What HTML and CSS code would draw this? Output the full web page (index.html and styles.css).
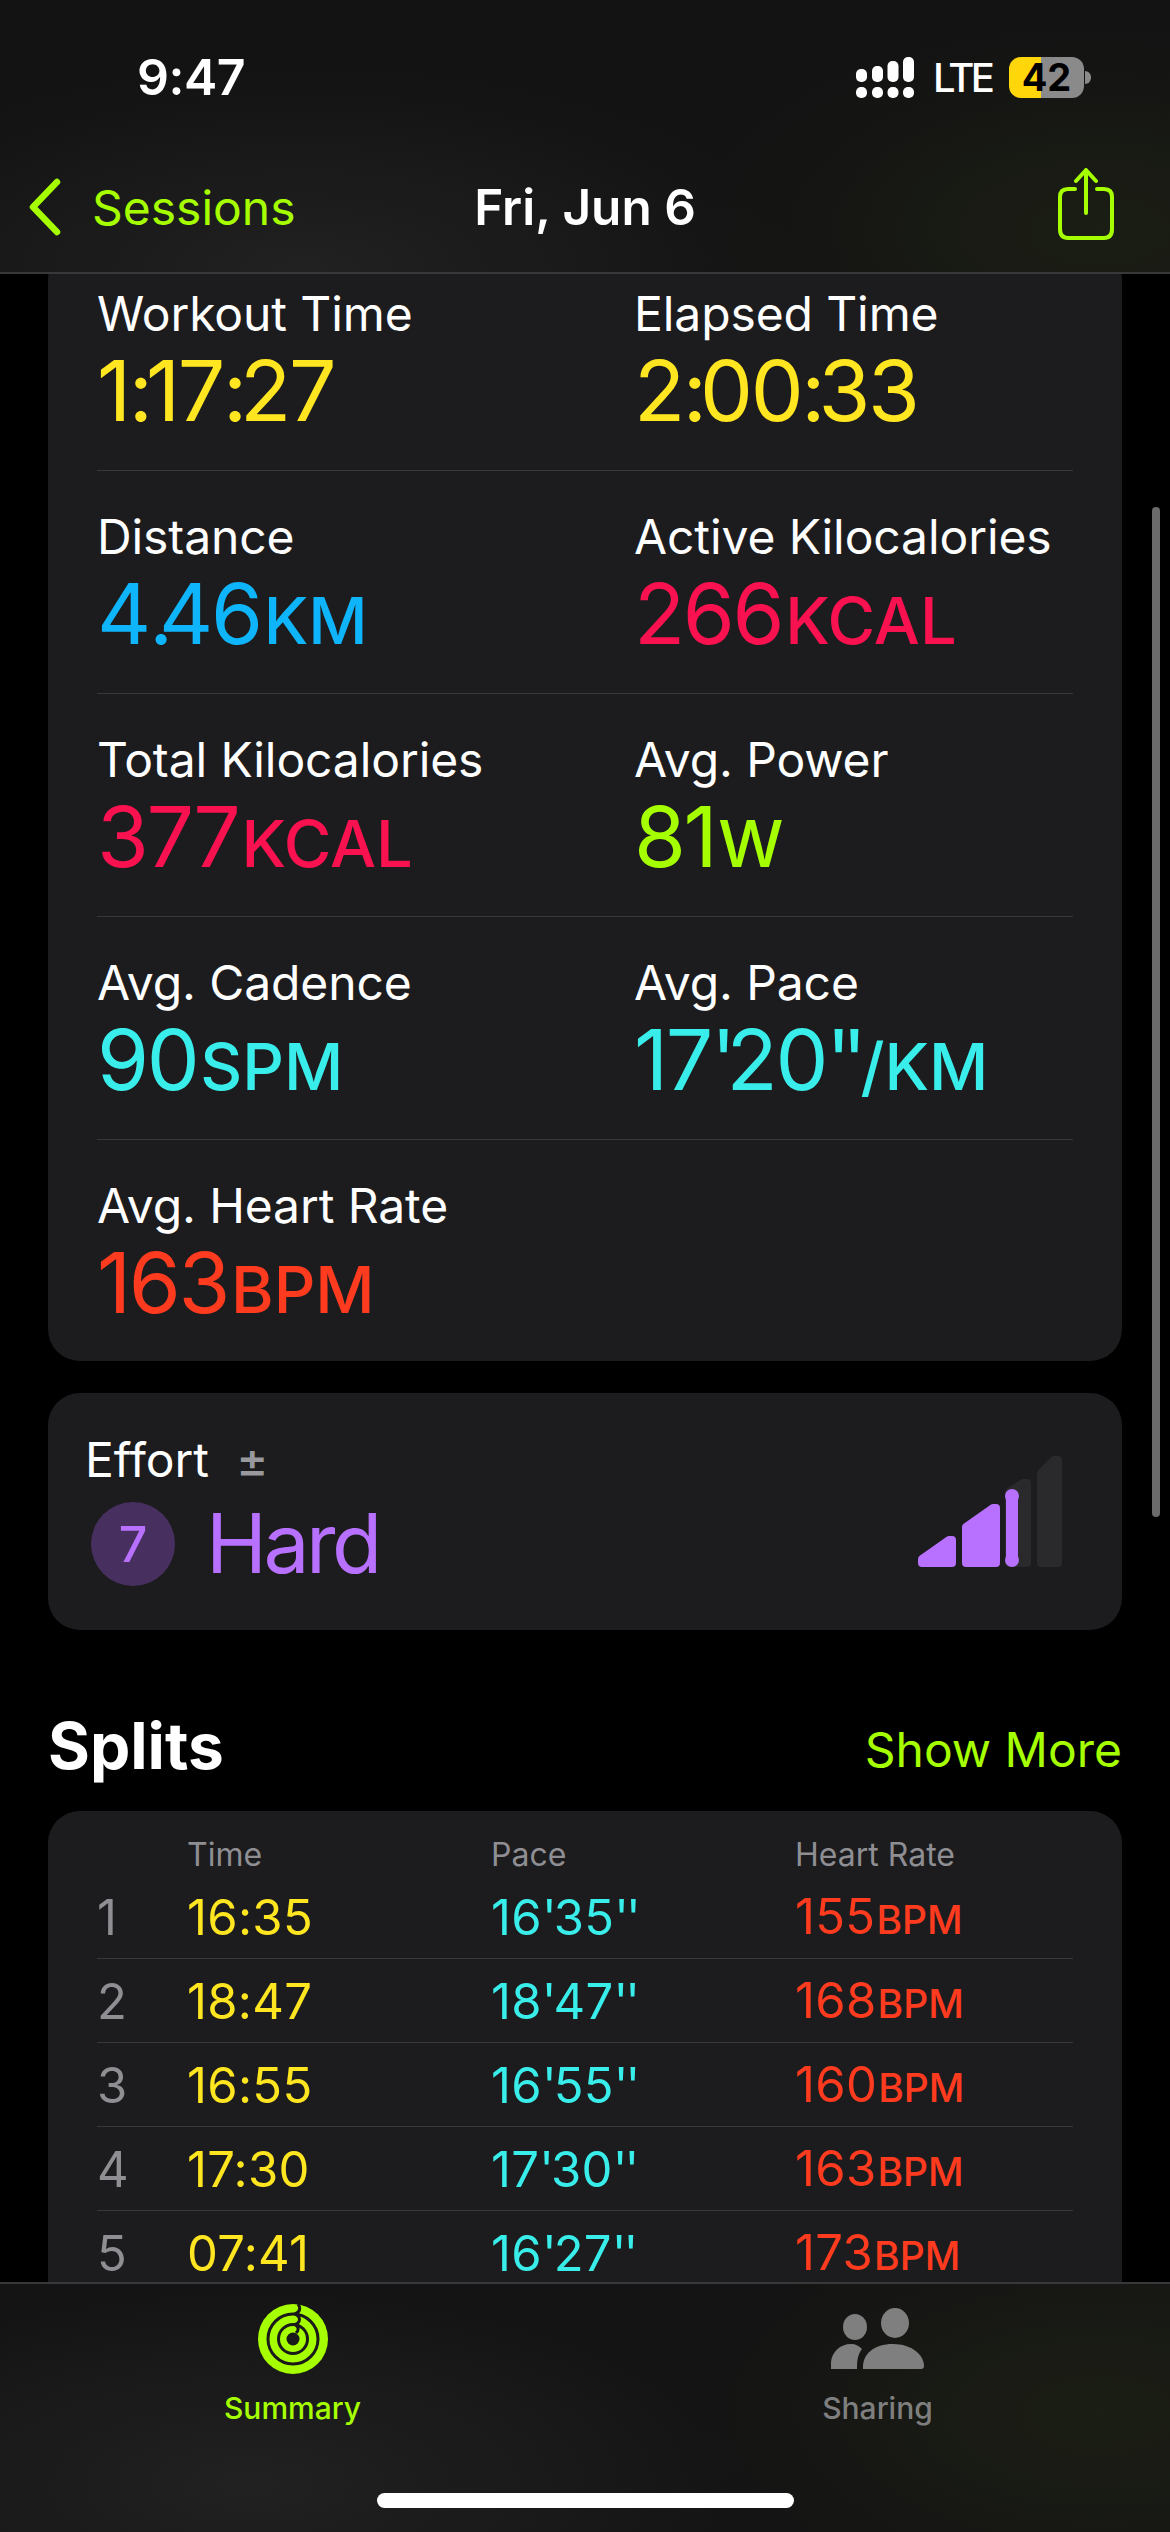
FILE: index.html
```html
<!DOCTYPE html>
<html lang="en">
<head>
  <meta charset="UTF-8">
  <title>Fri, Jun 6</title>
  <link rel="stylesheet" href="styles.css">
</head>
<body>
  <div class="app">
    <header class="topbar">
      <div class="status">
        <span class="clock">9:47</span>
        <div class="status-right">
          <svg class="signal" width="58" height="41" viewBox="0 0 58 41">
            <rect x="0" y="12" width="11" height="13" rx="5" />
            <rect x="16" y="9" width="11" height="16" rx="5" />
            <rect x="31.500" y="4" width="11" height="21" rx="5" />
            <rect x="47" y="0" width="11" height="25" rx="5" />
            <rect x="0" y="30" width="11" height="11" rx="5" />
            <rect x="16" y="30" width="11" height="11" rx="5" />
            <rect x="31.500" y="30" width="11" height="11" rx="5" />
            <rect x="47" y="30" width="11" height="11" rx="5" />
          </svg>
          <span class="lte">LTE</span>
          <div class="battery"><span>42</span></div>
          <span class="battery-tip"></span>
        </div>
      </div>
      <nav class="nav">
        <a class="back">
          <svg width="34" height="58" viewBox="0 0 34 58" fill="none" stroke="#a6ff00" stroke-width="6.500" stroke-linecap="round" stroke-linejoin="round"><path d="M29 4 L5 29 L29 54" /></svg>
          <span>Sessions</span>
        </a>
        <h1 class="nav-title">Fri, Jun 6</h1>
        <a class="share">
          <svg width="56" height="72" viewBox="0 0 56 72" fill="none" stroke="#a6ff00" stroke-width="4" stroke-linecap="round" stroke-linejoin="round"><path d="M17 21 H10 Q2 21 2 29 V61 Q2 70 10 70 H46 Q54 70 54 61 V29 Q54 21 46 21 H39" /><path d="M28 45 V3" /><path d="M18 13 L28 2 L38 13" /></svg>
        </a>
      </nav>
    </header>

    <main class="content">
      <div class="scroll">
        <section class="card metrics">
          <div class="metric-row">
            <div class="metric"><div class="label">Workout Time</div><div class="value yellow">1<i class="sep">:</i>17<i class="sep">:</i>27</div></div>
            <div class="metric"><div class="label">Elapsed Time</div><div class="value yellow">2<i class="sep">:</i>00<i class="sep">:</i>33</div></div>
          </div>
          <div class="metric-row">
            <div class="metric"><div class="label">Distance</div><div class="value blue">4<i class="dot">.</i>46<small>KM</small></div></div>
            <div class="metric"><div class="label">Active Kilocalories</div><div class="value pink">266<small>KCAL</small></div></div>
          </div>
          <div class="metric-row">
            <div class="metric"><div class="label">Total Kilocalories</div><div class="value pink">377<small>KCAL</small></div></div>
            <div class="metric"><div class="label">Avg. Power</div><div class="value lime">81<small>W</small></div></div>
          </div>
          <div class="metric-row">
            <div class="metric"><div class="label">Avg. Cadence</div><div class="value cyan">90<small>SPM</small></div></div>
            <div class="metric"><div class="label">Avg. Pace</div><div class="value cyan">17<i class="ticks">'</i>20<i class="ticks">''</i><small>/KM</small></div></div>
          </div>
          <div class="metric-row last">
            <div class="metric"><div class="label">Avg. Heart Rate</div><div class="value red">163<small>BPM</small></div></div>
          </div>
        </section>

        <section class="card effort">
          <div class="effort-left">
            <div class="label">Effort <span class="plusminus">±</span></div>
            <div class="effort-value">
              <span class="badge">7</span>
              <span class="effort-text">Hard</span>
            </div>
          </div>
          <svg class="effort-bars" width="144" height="111" viewBox="0 0 144 111">
            <g fill="#2a2a2c" stroke="#2a2a2c" stroke-width="8" stroke-linejoin="round">
              <path d="M91 36 L105 27 L109 27 V107 H91 Z" />
              <path d="M123 17 L136 4 L140 4 V107 H123 Z" />
            </g>
            <g fill="#b870ff" stroke="#b870ff" stroke-width="8" stroke-linejoin="round">
              <path d="M4 103 L31 84 L34 84 V107 H4 Z" />
              <path d="M48 71 L75 52 L78 52 V107 H48 Z" />
            </g>
            <g fill="#b870ff">
              <rect x="88" y="36" width="12" height="70" />
              <circle cx="94" cy="40" r="7" />
              <circle cx="94" cy="104" r="7" />
            </g>
          </svg>
        </section>

        <div class="section-head">
          <h2>Splits</h2>
          <a class="more">Show More</a>
        </div>

        <section class="card splits">
          <div class="split-head">
            <span></span><span>Time</span><span>Pace</span><span>Heart Rate</span>
          </div>
          <div class="split-row"><span class="num">1</span><span class="yellow">16:35</span><span class="cyan">16<i class="ticks">'</i>35<i class="ticks">''</i></span><span class="red">155<small>BPM</small></span></div>
          <div class="split-row"><span class="num">2</span><span class="yellow">18:47</span><span class="cyan">18<i class="ticks">'</i>47<i class="ticks">''</i></span><span class="red">168<small>BPM</small></span></div>
          <div class="split-row"><span class="num">3</span><span class="yellow">16:55</span><span class="cyan">16<i class="ticks">'</i>55<i class="ticks">''</i></span><span class="red">160<small>BPM</small></span></div>
          <div class="split-row"><span class="num">4</span><span class="yellow">17:30</span><span class="cyan">17<i class="ticks">'</i>30<i class="ticks">''</i></span><span class="red">163<small>BPM</small></span></div>
          <div class="split-row"><span class="num">5</span><span class="yellow">07:41</span><span class="cyan">16<i class="ticks">'</i>27<i class="ticks">''</i></span><span class="red">173<small>BPM</small></span></div>
        </section>
      </div>
      <div class="scrollbar"></div>
    </main>

    <footer class="tabbar">
      <div class="tabs">
        <a class="tab active">
          <svg width="70" height="70" viewBox="0 0 70 70">
            <circle cx="35" cy="35" r="35" fill="#a6ff00" />
            <g fill="none" stroke="#1a1a1a" stroke-width="3">
              <circle cx="35" cy="35" r="25" />
              <circle cx="35" cy="35" r="14.500" />
              <path d="M40 0 C43 4 42 8 37 10 C43 13 43 18 37 20.500 C41 23 41 26 38 29" />
            </g>
            <circle cx="35" cy="35" r="6.500" fill="#1a1a1a" />
          </svg>
          <span>Summary</span>
        </a>
        <a class="tab">
          <svg width="93" height="62" viewBox="0 0 93 62" fill="#7f7f7f">
            <ellipse cx="24" cy="19" rx="12" ry="13" />
            <ellipse cx="64" cy="15" rx="14" ry="15" />
            <path d="M0 61 V54 C1 44 9 36 20 36 C25 36 28 38 31 41 C27 46 26 52 26 61 Z" />
            <path d="M32 61 C31 46 43 36 62 36 C81 36 93 47 93 58 Q93 61 90 61 Z" />
          </svg>
          <span>Sharing</span>
        </a>
      </div>
      <div class="home-indicator"></div>
    </footer>
  </div>
</body>
</html>
```

FILE: styles.css
```css
* { box-sizing: border-box; }
html, body { margin: 0; padding: 0; background: #000; }
body { font-family: Inter, "Liberation Sans", sans-serif; color: #fff; }
h1, h2 { margin: 0; }
i { font-style: normal; }

.app { width: 1170px; height: 2532px; display: flex; flex-direction: column; overflow: hidden; position: relative; }

/* top */
.topbar {
  height: 274px;
  flex: none;
  border-bottom: 2px solid #38383a;
  background:
    radial-gradient(500px 200px at 300px 270px, #212121, transparent),
    radial-gradient(400px 200px at 1100px 230px, #1b1e14, transparent),
    #131313;
  position: relative;
  z-index: 2;
}
.status { display: flex; justify-content: space-between; align-items: center; height: 154px; padding: 0 79px 0 137px; }
.clock { font-size: 50px; font-weight: 600; line-height: 60px; letter-spacing: -0.5px; }
.status-right { display: flex; align-items: center; margin-top: 1px; }
.signal { fill: #fff; }
.lte { font-size: 40px; font-weight: 500; margin-left: 19px; line-height: 41px; letter-spacing: -3.500px; }
.battery {
  width: 75px;
  height: 41px;
  margin-left: 17.500px;
  border-radius: 12px;
  background: linear-gradient(90deg, #ffd60a 0, #ffd60a 32px, #8a8a8a 32px);
  color: #000;
  font-size: 38px;
  font-weight: 700;
  line-height: 41px;
  text-align: center;
}
.battery-tip { width: 6px; height: 13px; margin-left: 1px; background: #8a8a8a; border-radius: 0 7px 7px 0; }

.nav { display: grid; grid-template-columns: 1fr auto 1fr; align-items: center; height: 106px; padding: 0 28px; }
.back { display: flex; align-items: center; gap: 30px; color: #a6ff00; font-size: 48px; }
.nav-title { font-size: 49.500px; font-weight: 600; line-height: 58px; }
.share { justify-self: end; margin: -6px 28px 0 0; }
.share svg { display: block; }

/* main scroll area */
.content { flex: 1; min-height: 0; overflow: hidden; position: relative; }
.scroll { margin-top: -26px; padding: 0 48px; }
.card { background: #1c1c1e; border-radius: 32px; }

.metrics { padding: 0 49px; }
.metric-row { display: grid; grid-template-columns: 537px 1fr; height: 223px; padding-top: 41px; border-bottom: 1px solid #38383a; }
.metric-row.last { border-bottom: 0; height: 221px; }
.label { font-size: 48px; line-height: 50px; letter-spacing: -0.100px; }
.value { font-size: 84px; line-height: 90px; margin-top: 7px; letter-spacing: -2.400px; }
.value small { font-size: 65px; font-weight: 500; margin-left: 3px; letter-spacing: 0; }
.value .ticks { letter-spacing: -9.500px; }
.value .sep { letter-spacing: -7px; }
.value .dot { letter-spacing: -14px; }

.yellow { color: #ffe620; }
.blue { color: #0fb5fb; }
.pink { color: #fa114f; }
.lime { color: #a6ff00; }
.cyan { color: #39eeea; }
.red { color: #ff3b1f; }

.effort { margin-top: 32px; height: 237px; padding: 42px 60px 0 37px; display: flex; justify-content: space-between; }
.plusminus { color: #98989d; font-size: 48px; font-weight: 500; margin-left: 14px; }
.effort-value { display: flex; align-items: center; margin-top: 17px; padding-left: 6px; }
.badge { width: 84px; height: 84px; border-radius: 50%; background: #47305f; color: #b870ff; font-size: 50px; font-weight: 500; display: flex; align-items: center; justify-content: center; }
.effort-text { color: #b870ff; font-size: 82px; line-height: 84px; margin-left: 31px; letter-spacing: -3.500px; }
.effort-bars { margin-top: 21px; }

.section-head { display: flex; justify-content: space-between; align-items: center; margin-top: 79px; height: 72px; }
.section-head h2 { font-size: 64px; font-weight: 700; }
.more { color: #a6ff00; font-size: 48px; margin-top: 8px; }

.splits { margin-top: 30px; padding: 0 49px; height: 600px; }
.split-head,
.split-row { display: grid; grid-template-columns: 90px 304px 304px 1fr; align-items: center; }
.split-head { height: 64px; padding-top: 22px; color: #8e8e93; font-size: 32px; }
.split-row { height: 84px; padding-top: 3px; line-height: 50px; border-bottom: 1px solid #38383a; font-size: 49px; letter-spacing: 0.300px; }
.split-row .num { color: #8e8e93; }
.split-row small { font-size: 39px; font-weight: 500; margin-left: 1px; letter-spacing: 0; }
.split-row .ticks { letter-spacing: -3px; }

.scrollbar { position: absolute; left: 1152px; top: 233px; width: 8px; height: 1010px; border-radius: 4px; background: #6b6b6b; }

/* bottom */
.tabbar {
  height: 250px;
  flex: none;
  border-top: 2px solid #38383a;
  background:
    radial-gradient(500px 200px at 250px 200px, #212121, transparent),
    radial-gradient(400px 200px at 1100px 130px, #1b1e14, transparent),
    #141414;
  position: relative;
}
.tabs { display: grid; grid-template-columns: 1fr 1fr; }
.tab { display: flex; flex-direction: column; align-items: center; font-size: 30px; font-weight: 500; color: #7f7f7f; }
.tab svg { display: block; height: 70px; margin-top: 20px; }
.tab span { margin-top: 14px; line-height: 40px; }
.tab.active { color: #a6ff00; }
.home-indicator { position: absolute; left: 377px; bottom: 24px; width: 417px; height: 15px; border-radius: 8px; background: #fff; }
```
